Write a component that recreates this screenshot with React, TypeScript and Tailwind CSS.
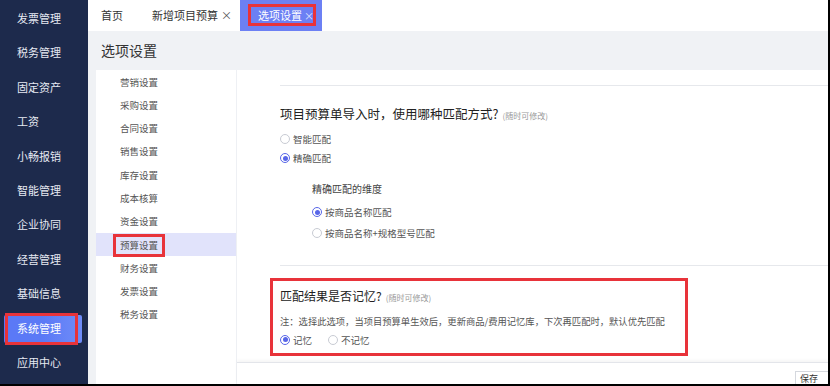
import React from 'react';

const sideItems = ['发票管理', '税务管理', '固定资产', '工资', '小畅报销', '智能管理', '企业协同', '经营管理', '基础信息', '系统管理', '应用中心'];
const menuItems = ['营销设置', '采购设置', '合同设置', '销售设置', '库存设置', '成本核算', '资金设置', '预算设置', '财务设置', '发票设置', '税务设置'];

function Radio({ checked, label, className = '' }: { checked?: boolean; label: string; className?: string }) {
  return (
    <div className={`flex items-center gap-[3px] ${className}`}>
      <span
        className={`w-[10px] h-[10px] rounded-full border flex items-center justify-center bg-white ${
          checked ? 'border-[#5866e8]' : 'border-[#c8cbd3]'
        }`}
      >
        {checked && <span className="w-[5px] h-[5px] rounded-full bg-[#5866e8]" />}
      </span>
      <span className="text-[9.5px] text-[#555]">{label}</span>
    </div>
  );
}

export default function App() {
  return (
    <div
      className="w-[830px] h-[386px] bg-black overflow-hidden"
      style={{ fontFamily: '"Noto Sans CJK SC", "Noto Sans", sans-serif' }}
    >
      <div className="w-[828px] h-[384px] flex overflow-hidden">
        {/* Sidebar */}
        <aside className="w-[88px] shrink-0 bg-[#1d2a4c] flex flex-col pt-[1px]">
          {sideItems.map((item) => {
            const active = item === '系统管理';
            return (
              <div key={item} className="relative h-[34.4px] flex items-center">
                {active && (
                  <>
                    <div className="absolute left-[4px] right-[6px] top-[4px] bottom-[2px] bg-gradient-to-r from-[#5b79f6] via-[#5b79f6] to-[#6f8cf8] rounded-[2px]" />
                    <div className="absolute left-[5px] w-[73px] top-[2px] bottom-[0px] border-[3px] border-[#e8333a]" />
                  </>
                )}
                <span className={`relative pl-[17px] text-[11px] ${active ? 'text-white mt-[2px]' : 'text-[#e6e9f2]'}`}>{item}</span>
              </div>
            );
          })}
        </aside>

        {/* Main */}
        <div className="flex-1 flex flex-col bg-[#f0f2f5] min-w-0">
          {/* Tabs */}
          <div className="h-[31px] bg-white flex items-stretch text-[11px] text-[#333]">
            <div className="pl-[13px] pr-[29px] flex items-center">首页</div>
            <div className="flex items-center pr-[8px]">
              新增项目预算<span className="ml-[3px] text-[#555]">×</span>
            </div>
            <div className="relative w-[82px] bg-[#6c80f4] flex items-center text-white">
              <div className="absolute left-[8px] top-[4px] w-[68px] h-[22px] border-[3px] border-[#e8333a]" />
              <span className="pl-[18px]">选项设置</span>
              <span className="ml-[2px] text-[#dfe4ff] text-[10px]">×</span>
            </div>
          </div>

          {/* Header */}
          <div className="h-[39px] flex items-center pl-[13px] text-[14px] text-[#333]">选项设置</div>

          {/* Content */}
          <div className="flex-1 flex pl-[8px] min-h-0">
            {/* Left menu */}
            <div className="w-[140px] shrink-0 bg-white flex flex-col">
              {menuItems.map((m) => {
                const active = m === '预算设置';
                return (
                  <div
                    key={m}
                    className={`relative h-[23.3px] flex items-center pl-[24px] text-[9.5px] text-[#555] ${active ? 'bg-[#e1e3fb]' : ''}`}
                  >
                    {active && <div className="absolute left-[17px] w-[52px] top-[1px] bottom-[-1px] border-[3px] border-[#e8333a]" />}
                    <span className="relative">{m}</span>
                  </div>
                );
              })}
            </div>

            {/* Right panel */}
            <div className="flex-1 bg-white flex flex-col border-l border-[#eef0f4] min-w-0">
              <div className="flex-1 pl-[43px]">
                <div className="h-[16px] border-b border-[#e6e8ec]" />
                <div className="mt-[19px] flex items-baseline">
                  <span className="text-[12.5px] text-[#222]">项目预算单导入时，使用哪种匹配方式?</span>
                  <span className="ml-[4px] text-[8px] text-[#999]">(随时可修改)</span>
                </div>
                <Radio label="智能匹配" className="mt-[8px]" />
                <Radio checked label="精确匹配" className="mt-[5px]" />
                <div className="pl-[32px]">
                  <div className="mt-[16px] text-[10px] text-[#444]">精确匹配的维度</div>
                  <Radio checked label="按商品名称匹配" className="mt-[9px]" />
                  <Radio label="按商品名称+规格型号匹配" className="mt-[6px]" />
                </div>
                <div className="mt-[25px] border-b border-[#e6e8ec]" />
                <div className="mt-[12px] ml-[-10px] w-[418px] h-[78px] border-[3px] border-[#e8333a] pl-[7px] pt-[6px]">
                  <div className="flex items-baseline">
                    <span className="text-[12px] text-[#222]">匹配结果是否记忆?</span>
                    <span className="ml-[4px] text-[8px] text-[#999]">(随时可修改)</span>
                  </div>
                  <div className="mt-[10px] text-[9.3px] text-[#555] whitespace-nowrap">
                    注：选择此选项，当项目预算单生效后，更新商品/费用记忆库，下次再匹配时，默认优先匹配
                  </div>
                  <div className="mt-[4px] flex items-center gap-[16px]">
                    <Radio checked label="记忆" />
                    <Radio label="不记忆" />
                  </div>
                </div>
              </div>
              {/* Footer */}
              <div className="h-[22px] shrink-0 border-t border-[#e3e5ea] shadow-[0_-2px_3px_rgba(0,0,0,0.04)] flex justify-end items-end">
                <div className="w-[33px] h-[13px] border border-[#d5d8de] border-b-0 border-r-0 pl-[4px] text-[9px] leading-[13px] text-[#333] whitespace-nowrap">
                  保存
                </div>
              </div>
            </div>
          </div>
        </div>
      </div>
    </div>
  );
}
